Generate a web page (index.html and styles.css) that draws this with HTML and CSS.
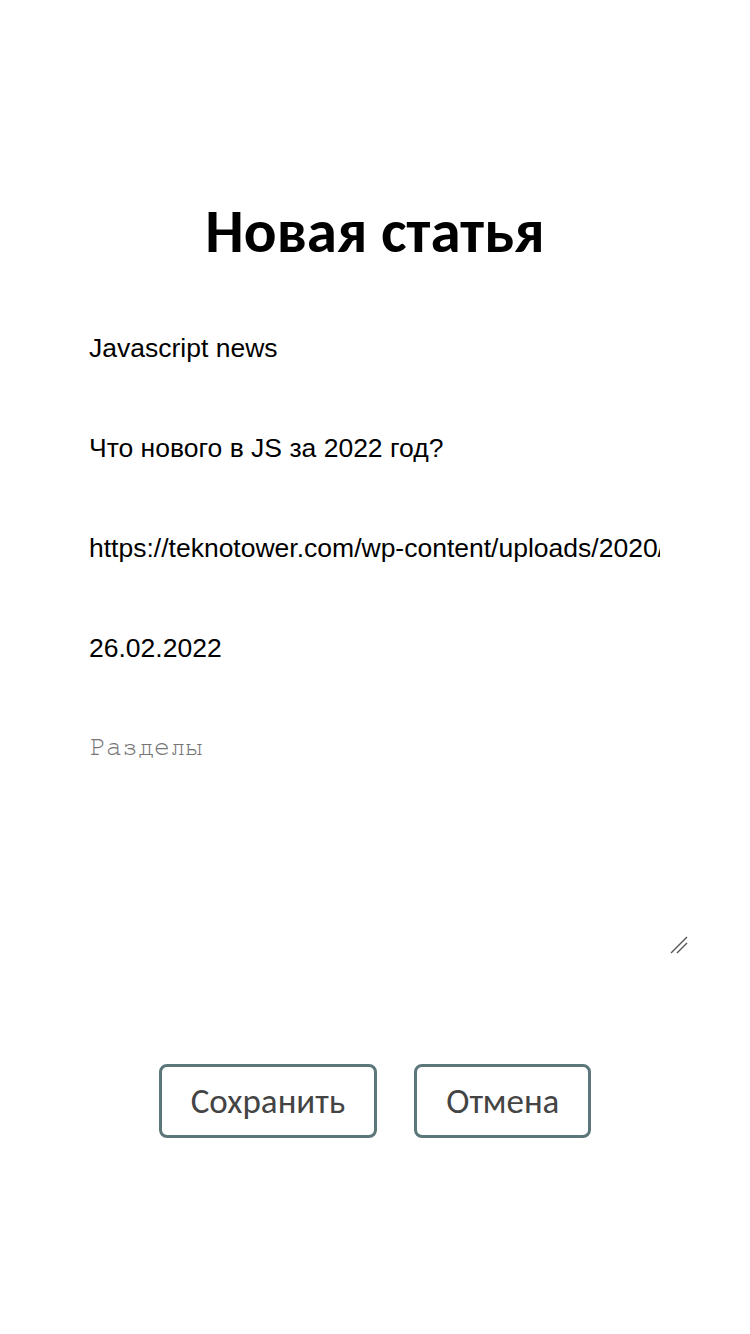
FILE: index.html
```html
<!DOCTYPE html>
<html lang="ru">
<head>
<meta charset="utf-8">
<title>Новая статья</title>
<link rel="stylesheet" href="styles.css">
</head>
<body>
<form class="form">
  <h1 class="title">Новая статья</h1>
  <div class="fields">
    <input class="field" type="text" value="Javascript news">
    <input class="field" type="text" value="Что нового в JS за 2022 год?">
    <input class="field" type="text" value="https://teknotower.com/wp-content/uploads/2020/12/javascript-news.jpg">
    <input class="field" type="text" value="26.02.2022">
    <textarea class="area" placeholder="Разделы"></textarea>
  </div>
  <div class="actions">
    <button class="btn" type="button">Сохранить</button>
    <button class="btn" type="button">Отмена</button>
  </div>
</form>
</body>
</html>
```

FILE: styles.css
```css
html, body {
  margin: 0;
  padding: 0;
  background: #fff;
}

.form {
  display: flex;
  flex-direction: column;
  align-items: center;
  padding-top: 195px;
}

.title {
  margin: 0;
  font-family: Carlito, "Open Sans", "Liberation Sans", sans-serif;
  font-weight: 700;
  font-size: 61px;
  line-height: 72px;
  color: #000;
}

.fields {
  display: flex;
  flex-direction: column;
  align-self: flex-start;
  margin-left: 88px;
  margin-top: 61px;
  gap: 60px;
}

.field {
  width: 573px;
  height: 40px;
  box-sizing: border-box;
  padding: 0 1px;
  border: none;
  outline: none;
  background: transparent;
  font-family: "Liberation Sans", Arial, sans-serif;
  font-size: 26.5px;
  color: #000;
}

.area {
  width: 602px;
  height: 235px;
  box-sizing: border-box;
  margin-top: -8px;
  padding: 14px 2px;
  border: none;
  outline: none;
  resize: none;
  background: transparent url("data:image/svg+xml,%3Csvg xmlns='http://www.w3.org/2000/svg' width='18' height='18'%3E%3Cpath d='M1 17L17 1M7 17L17 7' stroke='%23555' stroke-width='1.4'/%3E%3C/svg%3E") no-repeat right 2px bottom 1px;
  font-family: "Nimbus Mono PS", "FreeMono", "Liberation Mono", "DejaVu Sans Mono", monospace;
  font-size: 26.67px;
  color: #000;
}

.area::placeholder {
  font-family: "Nimbus Mono PS", "FreeMono", "Liberation Mono", "DejaVu Sans Mono", monospace;
  color: #757575;
}

.actions {
  display: flex;
  gap: 37px;
  margin-top: 109px;
}

.btn {
  height: 74px;
  padding: 0 29px;
  box-sizing: border-box;
  border: 3px solid #5c7779;
  border-radius: 8px;
  background: #fff;
  font-family: Carlito, "Open Sans", "Liberation Sans", sans-serif;
  font-size: 35px;
  color: #444;
}
```
